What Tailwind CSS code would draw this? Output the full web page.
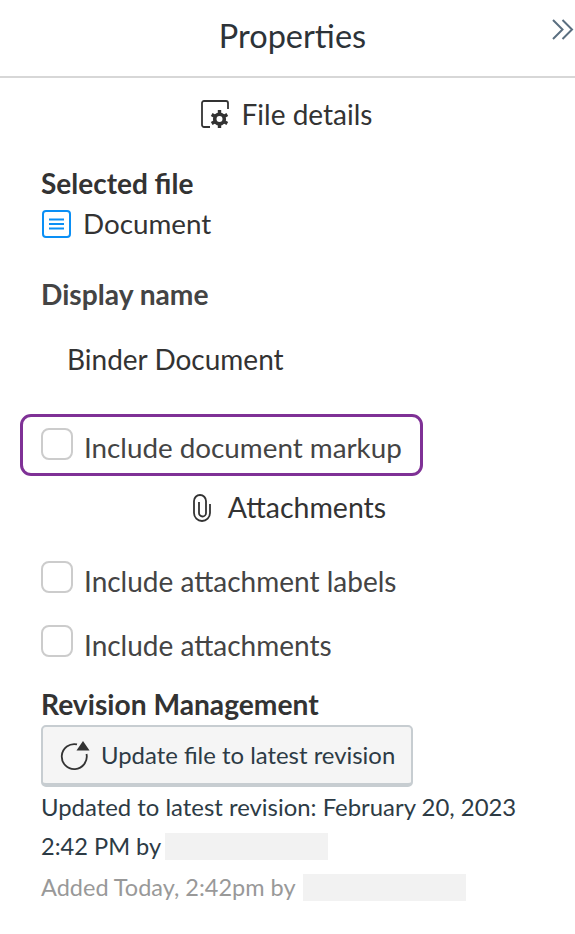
<!DOCTYPE html>
<html lang="en">
<head>
  <meta charset="UTF-8" />
  <meta name="viewport" content="width=device-width, initial-scale=1.0" />
  <title>Properties</title>
  <script src="https://cdn.jsdelivr.net/npm/@tailwindcss/browser@4"></script>
</head>
<body class="bg-white text-[#2d3b45] font-['Lato',sans-serif] w-[575px] h-[934px] overflow-hidden">

  <header class="relative h-[78px] border-b-2 border-[#d7d7d7] flex justify-center pt-[13px] pl-[10px]">
    <h1 class="text-[32.5px] leading-[46px] text-[#2d3338]">Properties</h1>
    <button class="absolute right-0 top-[18px] text-[#5a6f80]">
      <svg class="w-[24px] h-[24px]" viewBox="0 0 24 24" fill="none" stroke="currentColor" stroke-width="2"><path d="M2 2l9.500 9.500L2 21M11.500 2L21 11.500 11.500 21"/></svg>
    </button>
  </header>

  <div class="flex items-center justify-center gap-[13px] mt-[19px] h-[34px] pr-[2px] text-[#333]">
    <svg class="w-[28px] h-[28px]" viewBox="0 0 28 28" fill="none">
      <path d="M9 27H3a2 2 0 0 1-2-2V3a2 2 0 0 1 2-2h22a2 2 0 0 1 2 2v6" stroke="#333" stroke-width="1.800"/>
      <circle cx="18.500" cy="19" r="4.800" stroke="#333" stroke-width="3.600"/>
      <path d="M18.500 10v3.500M18.500 24.500v3.500M10.700 14.500l3 1.750M23.300 21.750l3 1.750M10.700 23.500l3-1.750M23.300 16.250l3-1.750" stroke="#333" stroke-width="3.400"/>
    </svg>
    <span class="text-[28px] leading-[34px]">File details</span>
  </div>

  <main class="px-[41px] pt-[32px]">
    <h2 class="text-[28px] leading-[40px] font-bold text-[#333]">Selected file</h2>
    <div class="flex items-center gap-[11px] h-[42px]">
      <svg class="w-[31px] h-[30px]" viewBox="0 0 31 30" fill="none" stroke="#0a8ff5">
        <rect x="2" y="2" width="27" height="26" rx="3" stroke-width="2"/>
        <path d="M8 10.500h15M8 15h15M8 19.500h15" stroke-width="2"/>
      </svg>
      <span class="text-[27.8px] leading-[34px] text-[#333]">Document</span>
    </div>

    <h2 class="text-[28.2px] leading-[40px] font-bold text-[#444] mt-[29px]">Display name</h2>
    <p class="text-[28px] leading-[34px] text-[#333] pl-[26px] mt-[28px]">Binder Document</p>

    <div class="flex items-center gap-[11px] w-[403px] h-[62px] -ml-[21px] mt-[38px] pl-[18px] border-[3px] border-[#7f3196] rounded-[11px]">
      <span class="w-[32px] h-[32px] mb-[3px] border-2 border-[#cccccc] rounded-[8px] shrink-0"></span>
      <span class="text-[27.8px] leading-[34px] pt-[5px] text-[#444]">Include document markup</span>
    </div>

    <div class="flex items-center justify-center gap-[16px] h-[34px] mt-[14px] pl-[3px] text-[#333]">
      <svg class="w-[20px] h-[30px]" viewBox="0 0 20 30" fill="none" stroke="#333" stroke-width="1.800">
        <path d="M18 12v9a8 8 0 0 1-16 0V9a6 6 0 0 1 12 0v12a3.500 3.500 0 0 1-7 0V10"/>
      </svg>
      <span class="text-[28.5px] leading-[34px]">Attachments</span>
    </div>

    <label class="flex gap-[11px] mt-[40px] h-[34px]">
      <span class="w-[32px] h-[32px] -mt-[3px] border-2 border-[#cccccc] rounded-[8px] shrink-0"></span>
      <span class="text-[28px] leading-[34px] text-[#444]">Include attachment labels</span>
    </label>
    <label class="flex gap-[11px] mt-[30px] h-[34px]">
      <span class="w-[32px] h-[32px] -mt-[3px] border-2 border-[#cccccc] rounded-[8px] shrink-0"></span>
      <span class="text-[28px] leading-[34px] text-[#444]">Include attachments</span>
    </label>

    <h2 class="text-[28.2px] leading-[36px] font-bold text-[#333] mt-[24px]">Revision Management</h2>
    <button class="flex items-center gap-[13px] w-[372px] h-[62px] mt-[3px] pl-[17px] bg-[#f5f5f5] border-2 border-b-[4px] border-[#c7cdd1] rounded-[5px] text-[#2d3b45]">
      <svg class="w-[28px] h-[28px] shrink-0 overflow-visible" viewBox="0 0 28 28" fill="none">
        <path d="M17 3.400A12.500 12.500 0 1 0 26.500 13" stroke="#333" stroke-width="1.800"/>
        <path d="M23 0l6.500 9.500H16.500z" fill="#333"/>
      </svg>
      <span class="text-[23.9px] leading-[32px]">Update file to latest revision</span>
    </button>

    <p class="text-[23.9px] leading-[34px] text-[#2d3b45] mt-[3px] whitespace-nowrap">Updated to latest revision: February 20, 2023</p>
    <p class="flex items-center text-[23.6px] leading-[34px] text-[#2d3b45] mt-[5px]">2:42 PM by<span class="w-[163px] h-[27px] ml-[4px] bg-[#f2f2f2]"></span></p>
    <p class="flex items-center text-[23.5px] leading-[34px] text-[#999] mt-[7px]">Added Today, 2:42pm by<span class="w-[163px] h-[27px] ml-[7px] bg-[#f2f2f2]"></span></p>
  </main>

</body>
</html>
